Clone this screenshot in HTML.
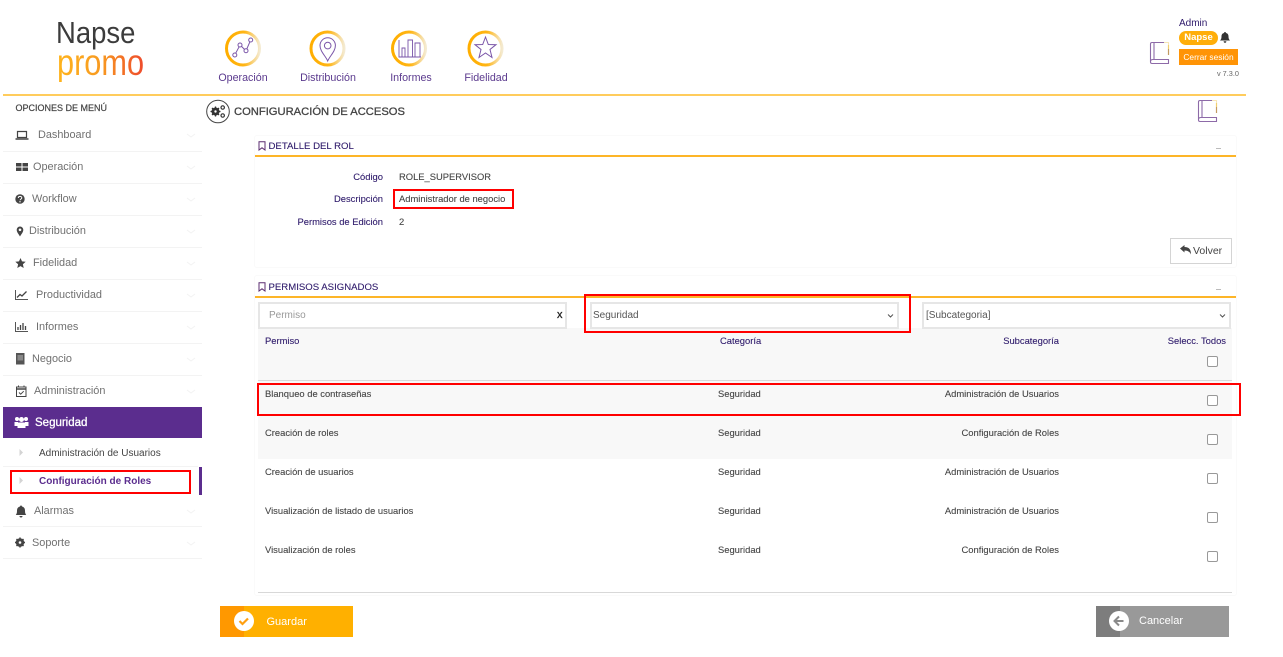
<!DOCTYPE html>
<html><head><meta charset="utf-8">
<style>
*{box-sizing:border-box}
html,body{margin:0;padding:0;background:#fff}
body{width:1283px;height:657px;position:relative;overflow:hidden;font-family:"Liberation Sans",sans-serif;font-size:9.4px;color:#444}
.a{position:absolute;white-space:nowrap}
.t{position:absolute;white-space:nowrap;line-height:14px;height:14px;-webkit-text-stroke:.1px currentColor}
.nav{font-size:10.9px;color:#707070;line-height:15px}
.sep{position:absolute;left:3px;width:199px;height:1px;background:#f3f3f3}
.top{font-size:10.7px;color:#5b3a8e;line-height:14px;text-align:center}
.pur{color:#2e1a6b}
.r{text-align:right}
.cb{position:absolute;left:1207px;width:11px;height:11px;border:1px solid #999;border-radius:2px;background:#fff}
.rb{position:absolute;border:2px solid #f00}
.inp{position:absolute;height:27px;border:2px solid #e6e6e6;background:#fff;font-size:10px;line-height:24px}
.ic{position:absolute}
</style></head><body>

<!-- logo -->
<div class="a" style="left:56px;top:15px;font-size:30.5px;line-height:36px;color:#3c3c3c;transform:scaleX(.9);transform-origin:left center">Napse</div>
<div class="a" style="left:57px;top:44px;font-size:37px;line-height:38px;transform:scaleX(.83);transform-origin:left center;background:linear-gradient(90deg,#ffb41c,#f89a20 50%,#ee4a2c);-webkit-background-clip:text;background-clip:text;color:transparent">promo</div>

<!-- top icons -->
<svg class="ic" style="left:220px;top:27px" width="290" height="42" viewBox="0 0 290 42" fill="none">
<defs><linearGradient id="g" x1="0" x2="1" y1="0" y2="0"><stop offset="0" stop-color="#ffae00"/><stop offset=".55" stop-color="#ffb515"/><stop offset="1" stop-color="#f4ead0"/></linearGradient></defs>
<g stroke="url(#g)" stroke-width="3"><circle cx="23" cy="21.500" r="16.500"/><circle cx="107.500" cy="21.500" r="16.500"/><circle cx="189" cy="21.500" r="16.500"/><circle cx="265.500" cy="21.500" r="16.500"/></g>
<g stroke="#7a55a8" stroke-width="1">
<circle cx="14.800" cy="28" r="2"/><circle cx="20" cy="18" r="2"/><circle cx="26" cy="23.700" r="2"/><circle cx="30.700" cy="13" r="2"/>
<path d="M15.700 26.200l3.400-6.400M21.500 19.400l3 3M26.800 21.900l3.100-7.100"/>
<path d="M107.700 34c-2-5-7.700-9.500-7.700-15.500a7.700 7.700 0 0 1 15.400 0c0 6-5.700 10.500-7.700 15.500z"/><circle cx="107.700" cy="18.600" r="3.300"/>
<path d="M179 13v17h22M182 30v-9h3v9M188 30V13h4.500v17M195 30V16h5v14" stroke-width=".9"/>
<path d="M265.500 10L268.300 17.500 276 17.700 270 22.500 272 30.500 265.500 26 259 30.500 261 22.500 255 17.700 262.700 17.500Z"/>
</g></svg>
<div class="a top" style="left:203px;width:80px;top:71px">Operación</div>
<div class="a top" style="left:288px;width:80px;top:71px">Distribución</div>
<div class="a top" style="left:371px;width:80px;top:71px">Informes</div>
<div class="a top" style="left:446px;width:80px;top:71px">Fidelidad</div>

<!-- top right -->
<svg class="ic" style="left:1149px;top:41px" width="22" height="24" viewBox="0 0 22 24" fill="none"><path d="M15 1.500H3Q1.500 1.500 1.500 3V21Q1.500 22.500 3 22.500H19.500V18.500H4Q1.500 18.500 1.500 20.500M5 1.500V18.500" stroke="#8d6aa8" stroke-width="1.100"/><path d="M15 1.500H19.500V4" stroke="#f7e6b8" stroke-width="1.100"/><path d="M19.500 4V8" stroke="#f2d070" stroke-width="1.200"/><path d="M19.500 8V14" stroke="#c39a60" stroke-width="1.200"/></svg>
<div class="a" style="left:1179px;top:18px;font-size:10px;line-height:12px;color:#2e1a6b">Admin</div>
<div class="a" style="left:1179px;top:31px;width:39px;height:14px;border-radius:7px;background:#ffae0a;color:#fff;font-size:9.500px;font-weight:bold;line-height:14px;text-align:center">Napse</div>
<svg class="ic" style="left:1220px;top:32px" width="10" height="11" viewBox="0 0 10 11"><path d="M5 0a1 1 0 0 1 1 1c2 .4 2.500 2 2.500 3.500 0 2 .5 3 1.500 4H0c1-1 1.500-2 1.500-4C1.500 3 2 1.400 4 1a1 1 0 0 1 1-1zM3.700 9.200h2.600A1.300 1.300 0 0 1 5 10.800a1.300 1.300 0 0 1-1.300-1.600z" fill="#333"/></svg>
<div class="a" style="left:1179px;top:49px;width:59px;height:16px;background:#ff9406;color:#fff;font-size:8.400px;line-height:17px;text-align:center">Cerrar sesión</div>
<div class="a" style="left:1217px;top:69px;font-size:7.300px;line-height:10px;color:#666">v 7.3.0</div>

<div class="a" style="left:3px;top:94px;width:1243px;height:2px;background:#ffcc5c"></div>

<!-- sidebar -->
<div class="a" style="left:15.500px;top:102px;font-size:9px;line-height:12px;color:#444;-webkit-text-stroke:.2px #444">OPCIONES DE MENÚ</div>

<div class="a nav" style="left:38px;top:128px">Dashboard</div>
<div class="a nav" style="left:33px;top:160px">Operación</div>
<div class="a nav" style="left:32px;top:192px">Workflow</div>
<div class="a nav" style="left:29px;top:224px">Distribución</div>
<div class="a nav" style="left:33px;top:256px">Fidelidad</div>
<div class="a nav" style="left:36px;top:288px">Productividad</div>
<div class="a nav" style="left:36px;top:320px">Informes</div>
<div class="a nav" style="left:32px;top:352px">Negocio</div>
<div class="a nav" style="left:34px;top:384px">Administración</div>
<div class="a nav" style="left:34px;top:504px">Alarmas</div>
<div class="a nav" style="left:32px;top:536px">Soporte</div>

<div class="sep" style="top:151px"></div><div class="sep" style="top:183px"></div><div class="sep" style="top:215px"></div><div class="sep" style="top:247px"></div><div class="sep" style="top:279px"></div><div class="sep" style="top:311px"></div><div class="sep" style="top:343px"></div><div class="sep" style="top:375px"></div><div class="sep" style="top:526px"></div><div class="sep" style="top:558px"></div>

<svg class="ic" style="left:0;top:120px" width="205" height="440" viewBox="0 120 205 440" fill="none">
<g stroke="#f3f3f3" stroke-width="1"><path d="M187 134l4 3 4-3M187 166l4 3 4-3M187 198l4 3 4-3M187 230l4 3 4-3M187 262l4 3 4-3M187 294l4 3 4-3M187 326l4 3 4-3M187 358l4 3 4-3M187 390l4 3 4-3M187 510l4 3 4-3M187 542l4 3 4-3"/></g>
<path d="M17.500 131.500h9v6h-9z" stroke="#444" stroke-width="1.200"/><path d="M15.500 139h13" stroke="#444" stroke-width="1.500"/>
<path d="M16 163h5.500v3.500H16zM22.500 163H28v3.500h-5.500zM16 167.500h5.500v3.500H16zM22.500 167.500H28v3.500h-5.500z" fill="#444"/>
<circle cx="20" cy="199" r="4.700" fill="#444"/><path d="M18.300 198c0-2.200 3.500-2.200 3.500-.1 0 1.200-1.700 1.200-1.700 2.300" stroke="#fff" stroke-width="1"/><circle cx="20" cy="201.800" r=".7" fill="#fff"/>
<path d="M20 236.500c-1-2-3.300-4-3.300-6.700a3.300 3.300 0 0 1 6.600 0c0 2.700-2.300 4.700-3.300 6.700z" fill="#444"/><circle cx="20" cy="229.800" r="1.300" fill="#fff"/>
<path d="M20.500 258l1.500 3.400 3.700.4-2.800 2.500.8 3.700-3.200-1.900-3.200 1.900.8-3.700-2.800-2.500 3.700-.4z" fill="#444"/>
<path d="M15.500 290v9.500H28" stroke="#555" stroke-width="1"/><path d="M17 297.500l3-3 2 1.500 4.500-4.500" stroke="#444" stroke-width="1.300"/>
<path d="M15.500 322v9.500H28" stroke="#555" stroke-width="1"/><path d="M18 330v-3M20.500 330v-5M23 330v-7M25.500 330v-4" stroke="#444" stroke-width="1.300"/>
<rect x="16" y="353" width="8.500" height="11.500" fill="#555"/><rect x="17.500" y="355" width="5.500" height="5.500" fill="#888"/>
<path d="M16.500 387h9.500v9.500h-9.500z" stroke="#444" stroke-width="1"/><path d="M16.500 389h9.500" stroke="#444" stroke-width="1.500"/><path d="M18.500 385.500v2M24 385.500v2" stroke="#444" stroke-width="1"/><path d="M19 392.500l1.700 1.700 3-3" stroke="#444" stroke-width="1"/>
<path d="M21 505.500a1 1 0 0 1 1 1c2.500.6 3 2.500 3 4.500 0 2 .5 3 1.200 4H15.800c.7-1 1.200-2 1.200-4 0-2 .5-3.900 3-4.500a1 1 0 0 1 1-1zM19.500 516h3a1.500 1.500 0 0 1-3 0z" fill="#444"/>
<circle cx="20" cy="542.500" r="3.200" stroke="#444" stroke-width="2.200"/><path d="M20 537.500v10M15 542.500h10M16.500 539l7 7M23.500 539l-7 7" stroke="#444" stroke-width="1.500"/><circle cx="20" cy="542.500" r="1.300" fill="#fff"/>
<path d="M19.500 449v7l3.500-3.500z" fill="#d4d4d4"/><path d="M19.500 477v7l3.500-3.500z" fill="#d4d4d4"/>
</svg>

<div class="a" style="left:3px;top:407px;width:199px;height:31px;background:#5b2d8e"></div>
<svg class="ic" style="left:14px;top:416px" width="15" height="13" viewBox="0 0 15 13"><g fill="#fff"><circle cx="3" cy="3" r="2"/><circle cx="12" cy="3" r="2"/><circle cx="7.500" cy="3.500" r="2.500"/><path d="M.5 6h3.500v4H.5zM11 6h3.500v4H11zM3.500 6.500h8V12h-8z"/></g></svg>
<div class="a" style="left:35px;top:416px;font-size:11.500px;line-height:14px;color:#fff;-webkit-text-stroke:.3px #fff">Seguridad</div>
<div class="a" style="left:39px;top:447px;font-size:10px;line-height:14px;color:#444">Administración de Usuarios</div>
<div class="a" style="left:39px;top:475px;font-size:10px;line-height:14px;color:#5b2d8e;font-weight:bold">Configuración de Roles</div>
<div class="sep" style="top:466px;width:195px"></div>
<div class="a" style="left:199px;top:467px;width:3px;height:28px;background:#5b2d8e"></div>
<div class="rb" style="left:10px;top:470px;width:181px;height:24px"></div>

<!-- title -->
<svg class="ic" style="left:206px;top:99px" width="25" height="25" viewBox="0 0 25 25" fill="none"><circle cx="12" cy="12.500" r="11.300" stroke="#444" stroke-width="1"/><circle cx="9.500" cy="12.500" r="2.800" stroke="#333" stroke-width="2.500"/><path d="M9.500 7.500v10M4.500 12.500h10M6 9l7 7M13 9l-7 7" stroke="#333" stroke-width="1.300"/><circle cx="9.500" cy="12.500" r="1.200" fill="#fff"/><circle cx="16.700" cy="8.500" r="1.700" stroke="#333" stroke-width="1.200"/><circle cx="16.700" cy="16.500" r="1.700" stroke="#333" stroke-width="1.200"/></svg>
<div class="a" style="left:234px;top:105px;font-size:11.200px;line-height:14px;color:#444;-webkit-text-stroke:.3px #444">CONFIGURACIÓN DE ACCESOS</div>
<svg class="ic" style="left:1197px;top:99px" width="22" height="24" viewBox="0 0 22 24" fill="none"><path d="M15 1.500H3Q1.500 1.500 1.500 3V21Q1.500 22.500 3 22.500H19.500V18.500H4Q1.500 18.500 1.500 20.500M5 1.500V18.500" stroke="#8d6aa8" stroke-width="1.100"/><path d="M15 1.500H19.500V4" stroke="#f7e6b8" stroke-width="1.100"/><path d="M19.500 4V8" stroke="#f2d070" stroke-width="1.200"/><path d="M19.500 8V14" stroke="#c39a60" stroke-width="1.200"/></svg>

<!-- panel 1 -->
<div class="a" style="left:254px;top:135px;width:983px;height:133px;border:1px solid #fafafa;border-radius:3px"></div>
<svg class="ic" style="left:258px;top:141px" width="8" height="10" viewBox="0 0 8 10" fill="none"><path d="M1 .8h6v8.200L4 6.800 1 9z" stroke="#5b2d70" stroke-width="1"/></svg>
<div class="a pur" style="left:268.500px;top:140px;font-size:9.600px;line-height:13px;-webkit-text-stroke:.1px #2e1a6b">DETALLE DEL ROL</div>
<div class="a" style="left:1216px;top:148px;width:5px;height:1px;background:#bbb"></div>
<div class="a" style="left:255px;top:155px;width:981px;height:2px;background:#fdb528"></div>

<div class="t pur r" style="left:283px;width:100px;top:170px">Código</div>
<div class="t" style="left:399px;top:170px">ROLE_SUPERVISOR</div>
<div class="t pur r" style="left:283px;width:100px;top:192px">Descripción</div>
<div class="t" style="left:399px;top:192px">Administrador de negocio</div>
<div class="rb" style="left:393px;top:189px;width:121px;height:20px"></div>
<div class="t pur r" style="left:283px;width:100px;top:215px">Permisos de Edición</div>
<div class="t" style="left:399px;top:215px">2</div>

<div class="a" style="left:1170px;top:238px;width:62px;height:26px;border:1px solid #d4d4d4;background:#fff"></div>
<svg class="ic" style="left:1180px;top:245px" width="12" height="10" viewBox="0 0 12 10"><path d="M0 3.500L4.500 0v2C9 2 11 4.500 11 9.500 10 7 8 5.500 4.500 5.500V7.500z" fill="#444"/></svg>
<div class="a" style="left:1193px;top:244px;font-size:10.500px;line-height:14px;color:#444">Volver</div>

<!-- panel 2 -->
<div class="a" style="left:254px;top:275px;width:983px;height:321px;border:1px solid #fafafa;border-radius:3px"></div>
<svg class="ic" style="left:258px;top:282px" width="8" height="10" viewBox="0 0 8 10" fill="none"><path d="M1 .8h6v8.200L4 6.800 1 9z" stroke="#5b2d70" stroke-width="1"/></svg>
<div class="a pur" style="left:268.500px;top:281px;font-size:9.600px;line-height:13px;-webkit-text-stroke:.1px #2e1a6b">PERMISOS ASIGNADOS</div>
<div class="a" style="left:1216px;top:289px;width:5px;height:1px;background:#bbb"></div>
<div class="a" style="left:255px;top:296px;width:981px;height:2px;background:#fdb528"></div>

<div class="a" style="left:258px;top:328px;width:974px;height:52px;background:#f8f8f8"></div>
<div class="a" style="left:258px;top:380px;width:974px;height:1px;background:#d8d8d8"></div>
<div class="a" style="left:258px;top:381px;width:974px;height:78px;background:#f8f8f8"></div>
<div class="a" style="left:258px;top:592px;width:974px;height:1px;background:#d8d8d8"></div>

<div class="inp" style="left:258px;top:302px;width:309px;color:#999;padding-left:9px">Permiso</div>
<div class="a" style="left:557px;top:308px;font-size:11px;line-height:14px;color:#222;-webkit-text-stroke:.3px #222">x</div>
<div class="inp" style="left:590px;top:302px;width:309px;padding-left:1px;color:#555">Seguridad</div>
<div class="inp" style="left:922px;top:302px;width:309px;padding-left:2px;color:#555">[Subcategoria]</div>
<svg class="ic" style="left:886px;top:312px" width="350" height="8" viewBox="0 0 350 8" fill="none"><path d="M2 2.500l2.500 2.500 2.500-2.500M334 2.500l2.500 2.500 2.500-2.500" stroke="#555" stroke-width="1"/></svg>
<div class="rb" style="left:584px;top:294px;width:327px;height:39px"></div>

<div class="t pur" style="left:265px;top:334px">Permiso</div>
<div class="t pur" style="left:720px;top:334px">Categoría</div>
<div class="t pur r" style="left:958px;width:101px;top:334px">Subcategoría</div>
<div class="t pur r" style="left:1125px;width:101px;top:334px">Selecc. Todos</div>
<div class="cb" style="top:356px"></div>

<div class="t" style="left:265px;top:387px">Blanqueo de contraseñas</div>
<div class="t" style="left:718px;top:387px">Seguridad</div>
<div class="t r" style="left:900px;width:159px;top:387px">Administración de Usuarios</div>
<div class="cb" style="top:395px"></div>

<div class="t" style="left:265px;top:426px">Creación de roles</div>
<div class="t" style="left:718px;top:426px">Seguridad</div>
<div class="t r" style="left:900px;width:159px;top:426px">Configuración de Roles</div>
<div class="cb" style="top:434px"></div>

<div class="t" style="left:265px;top:465px">Creación de usuarios</div>
<div class="t" style="left:718px;top:465px">Seguridad</div>
<div class="t r" style="left:900px;width:159px;top:465px">Administración de Usuarios</div>
<div class="cb" style="top:473px"></div>

<div class="t" style="left:265px;top:504px">Visualización de listado de usuarios</div>
<div class="t" style="left:718px;top:504px">Seguridad</div>
<div class="t r" style="left:900px;width:159px;top:504px">Administración de Usuarios</div>
<div class="cb" style="top:512px"></div>

<div class="t" style="left:265px;top:543px">Visualización de roles</div>
<div class="t" style="left:718px;top:543px">Seguridad</div>
<div class="t r" style="left:900px;width:159px;top:543px">Configuración de Roles</div>
<div class="cb" style="top:551px"></div>

<div class="rb" style="left:257px;top:383px;width:984px;height:33px"></div>

<!-- buttons -->
<div class="a" style="left:220px;top:606px;width:133px;height:31px;background:#ffb000"></div>
<div class="a" style="left:220px;top:606px;width:24px;height:31px;background:#ff9800"></div>
<div class="a" style="left:234px;top:611px;width:20px;height:20px;border-radius:50%;background:#fff"></div>
<svg class="ic" style="left:234px;top:611px" width="20" height="20" viewBox="0 0 20 20" fill="none"><path d="M5.500 10l3 3 5.500-5.500" stroke="#ff9f10" stroke-width="2.200"/></svg>
<div class="a" style="left:266.500px;top:615px;font-size:11px;line-height:15px;color:#fff">Guardar</div>

<div class="a" style="left:1096px;top:606px;width:133px;height:31px;background:#999"></div>
<div class="a" style="left:1096px;top:606px;width:24px;height:31px;background:#7d7d7d"></div>
<div class="a" style="left:1109px;top:611px;width:20px;height:20px;border-radius:50%;background:#fff"></div>
<svg class="ic" style="left:1109px;top:611px" width="20" height="20" viewBox="0 0 20 20" fill="none"><path d="M10 5.500L5.500 10l4.500 4.500M6 10h8.500" stroke="#8a8a8a" stroke-width="2"/></svg>
<div class="a" style="left:1139px;top:614px;font-size:11px;line-height:15px;color:#fff">Cancelar</div>

</body></html>
